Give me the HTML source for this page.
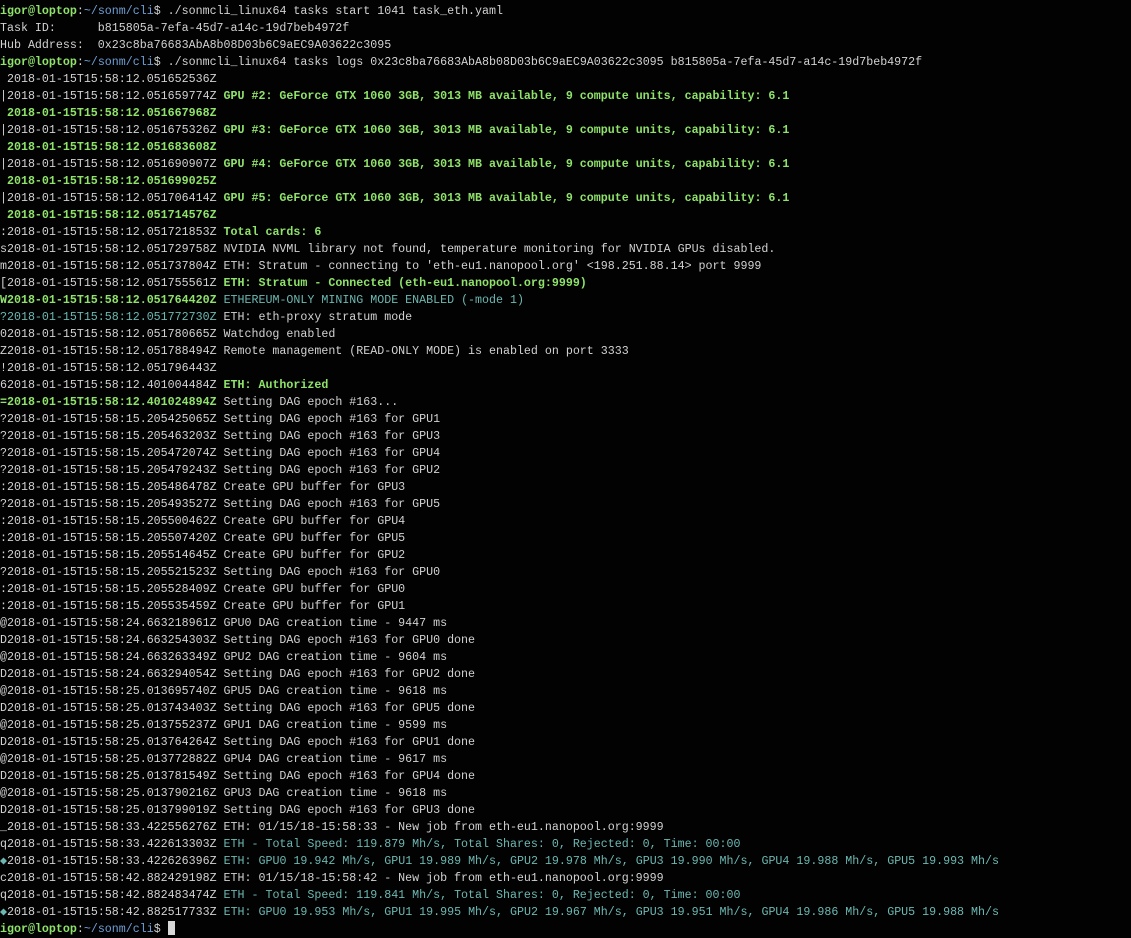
<!DOCTYPE html>
<html><head><meta charset="utf-8"><style>
html,body{margin:0;padding:0;background:#020202;}
body{width:1131px;height:938px;overflow:hidden;}
pre{margin:0;padding:3px 0 0 0;font-family:"Liberation Mono","DejaVu Sans Mono",monospace;font-size:11.65px;line-height:17px;color:#d2d2d2;white-space:pre;}
.g{color:#8fe36a;font-weight:bold}
.u{color:#8fe36a;font-weight:bold}
.b{color:#6f9fd6}
.c{color:#6cb8b2}
.cur{display:inline-block;width:7px;height:14px;background:#d8d8d8;vertical-align:-3px}
</style></head><body><pre><span class="u">igor@loptop</span>:<span class="b">~/sonm/cli</span>$ ./sonmcli_linux64 tasks start 1041 task_eth.yaml
Task ID:      b815805a-7efa-45d7-a14c-19d7beb4972f
Hub Address:  0x23c8ba76683AbA8b08D03b6C9aEC9A03622c3095
<span class="u">igor@loptop</span>:<span class="b">~/sonm/cli</span>$ ./sonmcli_linux64 tasks logs 0x23c8ba76683AbA8b08D03b6C9aEC9A03622c3095 b815805a-7efa-45d7-a14c-19d7beb4972f
 2018-01-15T15:58:12.051652536Z
|2018-01-15T15:58:12.051659774Z <span class="g">GPU #2: GeForce GTX 1060 3GB, 3013 MB available, 9 compute units, capability: 6.1</span>
<span class="g"> 2018-01-15T15:58:12.051667968Z</span>
|2018-01-15T15:58:12.051675326Z <span class="g">GPU #3: GeForce GTX 1060 3GB, 3013 MB available, 9 compute units, capability: 6.1</span>
<span class="g"> 2018-01-15T15:58:12.051683608Z</span>
|2018-01-15T15:58:12.051690907Z <span class="g">GPU #4: GeForce GTX 1060 3GB, 3013 MB available, 9 compute units, capability: 6.1</span>
<span class="g"> 2018-01-15T15:58:12.051699025Z</span>
|2018-01-15T15:58:12.051706414Z <span class="g">GPU #5: GeForce GTX 1060 3GB, 3013 MB available, 9 compute units, capability: 6.1</span>
<span class="g"> 2018-01-15T15:58:12.051714576Z</span>
:2018-01-15T15:58:12.051721853Z <span class="g">Total cards: 6</span>
s2018-01-15T15:58:12.051729758Z NVIDIA NVML library not found, temperature monitoring for NVIDIA GPUs disabled.
m2018-01-15T15:58:12.051737804Z ETH: Stratum - connecting to 'eth-eu1.nanopool.org' &lt;198.251.88.14&gt; port 9999
[2018-01-15T15:58:12.051755561Z <span class="g">ETH: Stratum - Connected (eth-eu1.nanopool.org:9999)</span>
<span class="g">W2018-01-15T15:58:12.051764420Z</span> <span class="c">ETHEREUM-ONLY MINING MODE ENABLED (-mode 1)</span>
<span class="c">?2018-01-15T15:58:12.051772730Z</span> ETH: eth-proxy stratum mode
02018-01-15T15:58:12.051780665Z Watchdog enabled
Z2018-01-15T15:58:12.051788494Z Remote management (READ-ONLY MODE) is enabled on port 3333
!2018-01-15T15:58:12.051796443Z
62018-01-15T15:58:12.401004484Z <span class="g">ETH: Authorized</span>
<span class="g">=2018-01-15T15:58:12.401024894Z</span> Setting DAG epoch #163...
?2018-01-15T15:58:15.205425065Z Setting DAG epoch #163 for GPU1
?2018-01-15T15:58:15.205463203Z Setting DAG epoch #163 for GPU3
?2018-01-15T15:58:15.205472074Z Setting DAG epoch #163 for GPU4
?2018-01-15T15:58:15.205479243Z Setting DAG epoch #163 for GPU2
:2018-01-15T15:58:15.205486478Z Create GPU buffer for GPU3
?2018-01-15T15:58:15.205493527Z Setting DAG epoch #163 for GPU5
:2018-01-15T15:58:15.205500462Z Create GPU buffer for GPU4
:2018-01-15T15:58:15.205507420Z Create GPU buffer for GPU5
:2018-01-15T15:58:15.205514645Z Create GPU buffer for GPU2
?2018-01-15T15:58:15.205521523Z Setting DAG epoch #163 for GPU0
:2018-01-15T15:58:15.205528409Z Create GPU buffer for GPU0
:2018-01-15T15:58:15.205535459Z Create GPU buffer for GPU1
@2018-01-15T15:58:24.663218961Z GPU0 DAG creation time - 9447 ms
D2018-01-15T15:58:24.663254303Z Setting DAG epoch #163 for GPU0 done
@2018-01-15T15:58:24.663263349Z GPU2 DAG creation time - 9604 ms
D2018-01-15T15:58:24.663294054Z Setting DAG epoch #163 for GPU2 done
@2018-01-15T15:58:25.013695740Z GPU5 DAG creation time - 9618 ms
D2018-01-15T15:58:25.013743403Z Setting DAG epoch #163 for GPU5 done
@2018-01-15T15:58:25.013755237Z GPU1 DAG creation time - 9599 ms
D2018-01-15T15:58:25.013764264Z Setting DAG epoch #163 for GPU1 done
@2018-01-15T15:58:25.013772882Z GPU4 DAG creation time - 9617 ms
D2018-01-15T15:58:25.013781549Z Setting DAG epoch #163 for GPU4 done
@2018-01-15T15:58:25.013790216Z GPU3 DAG creation time - 9618 ms
D2018-01-15T15:58:25.013799019Z Setting DAG epoch #163 for GPU3 done
_2018-01-15T15:58:33.422556276Z ETH: 01/15/18-15:58:33 - New job from eth-eu1.nanopool.org:9999
q2018-01-15T15:58:33.422613303Z <span class="c">ETH - Total Speed: 119.879 Mh/s, Total Shares: 0, Rejected: 0, Time: 00:00</span>
<span class="c">&#9670;</span>2018-01-15T15:58:33.422626396Z <span class="c">ETH: GPU0 19.942 Mh/s, GPU1 19.989 Mh/s, GPU2 19.978 Mh/s, GPU3 19.990 Mh/s, GPU4 19.988 Mh/s, GPU5 19.993 Mh/s</span>
c2018-01-15T15:58:42.882429198Z ETH: 01/15/18-15:58:42 - New job from eth-eu1.nanopool.org:9999
q2018-01-15T15:58:42.882483474Z <span class="c">ETH - Total Speed: 119.841 Mh/s, Total Shares: 0, Rejected: 0, Time: 00:00</span>
<span class="c">&#9670;</span>2018-01-15T15:58:42.882517733Z <span class="c">ETH: GPU0 19.953 Mh/s, GPU1 19.995 Mh/s, GPU2 19.967 Mh/s, GPU3 19.951 Mh/s, GPU4 19.986 Mh/s, GPU5 19.988 Mh/s</span>
<span class="u">igor@loptop</span>:<span class="b">~/sonm/cli</span>$ <span class="cur"></span></pre></body></html>
